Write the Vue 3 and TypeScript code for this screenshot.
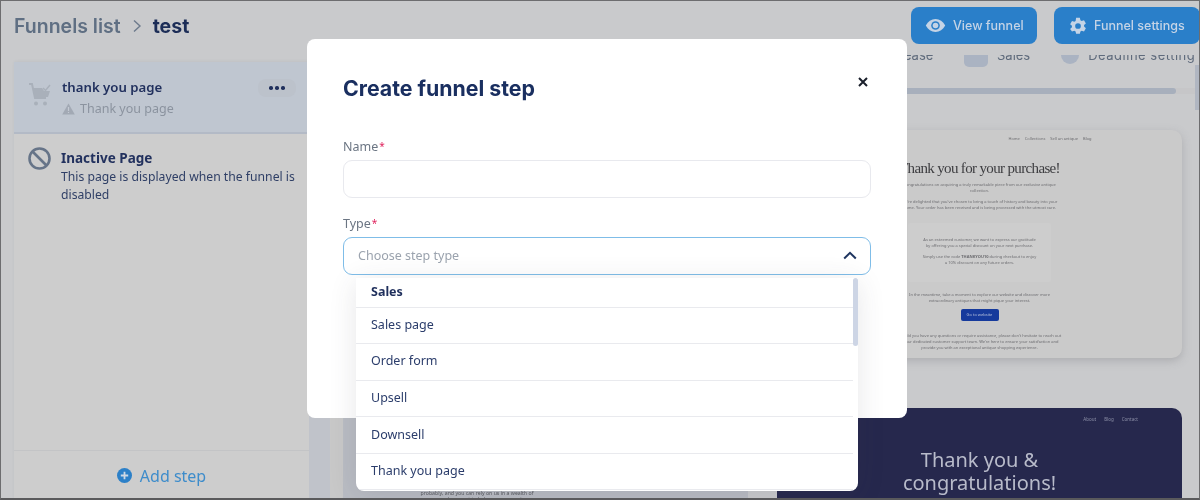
<script setup lang="ts">
const options: string[] = ['Sales page', 'Order form', 'Upsell', 'Downsell', 'Thank you page']
</script>

<template>
  <div class="screen">
    <header class="top">
      <nav class="crumbs">
        <span class="crumb-parent">Funnels list</span>
        <svg class="crumb-sep" width="10" height="14" viewBox="0 0 10 14"><path d="M2 1.5 8 7l-6 5.5" fill="none" stroke="#6d7a8c" stroke-width="1.4" /></svg>
        <span class="crumb-current">test</span>
      </nav>
      <div class="actions">
        <button class="action view">
          <svg width="21" height="15" viewBox="0 0 21 15"><path d="M.8 7.5C3 3.2 6.4 1 10.500 1s7.500 2.200 9.700 6.500C18 11.800 14.600 14 10.500 14S3 11.800.8 7.500Z" fill="#c5d4e6" /><circle cx="10.500" cy="7.500" r="4.300" fill="#2a7fc9" /><circle cx="10.500" cy="7.500" r="2.800" fill="#c5d4e6" /></svg>
          View funnel
        </button>
        <button class="action settings">
          <svg width="18" height="18" viewBox="0 0 24 24"><path fill="#c5d4e6" fill-rule="evenodd" d="M9.500 1h5l.7 3.200 1.700 1 3.100-1 2.500 4.300-2.400 2.200v2l2.400 2.200-2.500 4.300-3.100-1-1.700 1-.7 3.200h-5l-.7-3.200-1.700-1-3.100 1L1.500 15.900l2.400-2.200v-2L1.500 9.500 4 5.200l3.100 1 1.700-1L9.500 1ZM12 8.200a3.800 3.800 0 1 0 0 7.600 3.800 3.800 0 0 0 0-7.600Z" /></svg>
          Funnel settings
        </button>
      </div>
    </header>

    <div class="body">
      <aside class="sidebar">
        <div class="step selected">
          <svg class="cart" width="24" height="26" viewBox="0 0 24 26">
            <path d="M1 2h3l3 14h11" fill="none" stroke="#a9b0ba" stroke-width="2" />
            <path d="M5 6h9l2 3h6l-2 6H7Z" fill="#a9b0ba" />
            <path d="M15 6l2.500 2.500L22 3" fill="none" stroke="#a9b0ba" stroke-width="1.500" />
            <circle cx="8" cy="21.500" r="2" fill="#a9b0ba" /><circle cx="17" cy="21.500" r="2" fill="#a9b0ba" />
          </svg>
          <div class="step-text">
            <div class="step-name">thank you page</div>
            <div class="step-type">
              <svg width="13" height="12" viewBox="0 0 13 12"><path d="M6.500.5 12.800 11.500H.2Z" fill="#a2a9b4" /><path d="M6.500 4v4M6.500 9v1" stroke="#c4cad3" stroke-width="1.200" /></svg>
              Thank you page
            </div>
          </div>
          <span class="dots"><i></i><i></i><i></i></span>
        </div>
        <div class="step inactive">
          <svg class="ban" width="23" height="23" viewBox="0 0 23 23"><circle cx="11.500" cy="11.500" r="10" fill="none" stroke="#667488" stroke-width="2.600" /><path d="M4.500 4.500l14 14" stroke="#667488" stroke-width="2.600" /></svg>
          <div class="step-text">
            <div class="inactive-name">Inactive Page</div>
            <p class="inactive-desc">This page is displayed when the funnel is disabled</p>
          </div>
        </div>
        <div class="add-step">
          <svg width="15" height="15" viewBox="0 0 15 15"><circle cx="7.500" cy="7.500" r="7.500" fill="#2c80c8" /><path d="M3.800 7.500h7.400M7.500 3.800v7.400" stroke="#cdd8e4" stroke-width="1.800" /></svg>
          Add step
        </div>
      </aside>

      <main class="main">
        <div class="tabs">
          <span class="tab-label release">Release</span>
          <span class="tab-icon square"></span>
          <span class="tab-label">Sales</span>
          <span class="tab-icon round"></span>
          <span class="tab-label deadline">Deadline setting</span>
        </div>
        <div class="hscroll"><div class="hthumb"></div></div>
        <div class="previews">
          <div class="column">
            <div class="spacer-card"></div>
            <div class="lower-left">
              <p>probably, and you can rely on us in a wealth of</p>
              <p>resources and support to help you on your journey</p>
            </div>
          </div>
          <div class="column">
            <article class="card light">
              <div class="light-nav"><span>Home</span><span>Collections</span><span>Sell an antique</span><span>Blog</span></div>
              <h3>Thank you for your purchase!</h3>
              <p>Congratulations on acquiring a truly remarkable piece from our exclusive antique<br />collection.</p>
              <p>We're delighted that you've chosen to bring a touch of history and beauty into your<br />home. Your order has been received and is being processed with the utmost care.</p>
              <div class="offer">
                <p>As an esteemed customer, we want to express our gratitude<br />by offering you a special discount on your next purchase.</p>
                <p>Simply use the code <b>THANKYOU10</b> during checkout to enjoy<br />a 10% discount on any future orders.</p>
              </div>
              <p>In the meantime, take a moment to explore our website and discover more<br />extraordinary antiques that might pique your interest.</p>
              <span class="go">Go to website</span>
              <p>Should you have any questions or require assistance, please don't hesitate to reach out<br />to our dedicated customer support team. We're here to ensure your satisfaction and<br />provide you with an exceptional antique shopping experience.</p>
            </article>
            <article class="card dark">
              <div class="dark-nav"><span>About</span><span>Blog</span><span>Contact</span></div>
              <h3>Thank you &amp;<br />congratulations!</h3>
            </article>
          </div>
        </div>
        <div class="vthumb"></div>
      </main>
    </div>

    <section class="modal">
      <div class="modal-head">
        <h2>Create funnel step</h2>
        <svg class="close" width="10" height="10" viewBox="0 0 10 10"><path d="M1 1l8 8M9 1 1 9" stroke="#1a1f2b" stroke-width="2" /></svg>
      </div>
      <label class="field-label">Name<em>*</em></label>
      <div class="input"></div>
      <label class="field-label second">Type<em>*</em></label>
      <div class="input select">
        <span>Choose step type</span>
        <svg width="14" height="9" viewBox="0 0 14 9"><path d="M1.200 7.500 7 1.800l5.800 5.700" fill="none" stroke="#1f3560" stroke-width="2" /></svg>
      </div>
    </section>

    <div class="dropdown">
      <div class="group">Sales</div>
      <div v-for="option in options" :key="option" class="option">{{ option }}</div>
      <div class="thumb"></div>
    </div>
  </div>
</template>

<style>
html, body { margin: 0; background: #c9c9cb; }
</style>

<style scoped>
.screen {
  position: relative;
  width: 1200px;
  height: 500px;
  overflow: hidden;
  box-sizing: border-box;
  background: #c9cacc;
  font-family: "Noto Sans", sans-serif;
  filter: blur(0.5px);
}
.screen::after {
  content: "";
  position: absolute;
  inset: 0;
  border-top: 1px solid #6d6d6f;
  border-left: 1px solid #6d6d6f;
  border-right: 1px solid #6d6d6f;
  border-bottom: 2px solid #5a5a5c;
  pointer-events: none;
}
.top {
  height: 55px;
  display: flex;
  align-items: flex-start;
  justify-content: space-between;
  padding: 7px 0 0 14px;
  box-sizing: border-box;
}
.crumbs {
  display: flex;
  align-items: center;
  height: 37px;
  font-family: Inter, sans-serif;
  font-size: 19.500px;
  font-weight: 600;
}
.crumb-parent { color: #5f6f83; }
.crumb-sep { margin: 0 11px; }
.crumb-current { color: #1c2d57; font-weight: 700; }
.actions { display: flex; gap: 17px; }
.action {
  display: flex;
  align-items: center;
  height: 37px;
  border: 0;
  border-radius: 8px;
  background: #2a7fc9;
  color: #c5d4e6;
  font-family: Inter, sans-serif;
  font-size: 12.500px;
  font-weight: 500;
  padding: 0;
}
.view { width: 126px; padding-left: 14px; gap: 7px; }
.settings { width: 146px; padding-left: 15px; gap: 7px; }
.body { display: flex; height: 445px; padding-left: 14px; }
.sidebar {
  width: 295px;
  flex: none;
  margin-top: 7px;
  height: 438px;
  display: flex;
  flex-direction: column;
  background: #cdcdcd;
  box-shadow: 1px 0 3px rgba(150, 155, 165, 0.3);
  color: #1f2f5c;
}
.step { display: flex; box-sizing: border-box; }
.selected {
  height: 72px;
  padding: 20px 12px 0 14px;
  background: #bfc6d0;
  border-bottom: 2px solid #b3bac6;
  position: relative;
}
.cart { flex: none; margin-right: 10px; }
.step-name { font-size: 13.200px; font-weight: 600; line-height: 18px; margin-top: -4px; color: #22315e; }
.step-type {
  display: flex;
  align-items: center;
  gap: 5px;
  margin-top: 4px;
  font-size: 12.500px;
  line-height: 18px;
  color: #8b939f;
}
.dots {
  position: absolute;
  left: 244px;
  top: 17px;
  width: 38px;
  height: 18px;
  border-radius: 8px;
  background: #bcc2cb;
  display: flex;
  align-items: center;
  justify-content: center;
  gap: 2.500px;
}
.dots i { width: 3.500px; height: 3.500px; border-radius: 50%; background: #1f2f5c; }
.inactive { flex: 1; padding: 13px 10px 0 14px; }
.ban { flex: none; margin-right: 10px; }
.inactive-name { font-size: 13.500px; font-weight: 700; line-height: 18px; margin-top: 2px; color: #22315e; }
.inactive-desc { margin: 1px 0 0; font-size: 12.200px; line-height: 18px; color: #2f3f66; width: 240px; }
.add-step {
  height: 50px;
  flex: none;
  border-top: 1px solid #c3c4c6;
  display: flex;
  align-items: center;
  justify-content: center;
  gap: 8px;
  font-size: 16px;
  color: #3d8ccb;
  box-sizing: border-box;
}
.main {
  position: relative;
  flex: 1;
  overflow: hidden;
  padding-left: 34px;
  background: linear-gradient(90deg, #c0c3ca 0 21px, #c8c8c8 21px 34px, transparent 34px);
}
.tabs {
  display: flex;
  align-items: center;
  height: 24px;
  margin-top: -12px;
  font-family: Inter, sans-serif;
  font-size: 13px;
  color: #5f6b7c;
  white-space: nowrap;
}
.tab-label { flex: none; }
.release { margin-left: 542px; width: 48px; }
.deadline { letter-spacing: 0.5px; }
.tab-icon { flex: none; width: 24px; height: 24px; background: #aab3c2; }
.square { border-radius: 5px; margin: 0 9px 0 31px; }
.round { border-radius: 50%; width: 18px; height: 18px; margin: 0 9px 0 31px; }
.hscroll { height: 6px; margin: 21px 4px 0 -34px; background: #c6c6c8; }
.hthumb { width: 867px; height: 6px; background: #a7afbc; border-radius: 3px; }
.previews { display: grid; grid-template-columns: 405px 405px; gap: 29px; margin-top: 36px; }
.column { display: flex; flex-direction: column; gap: 50px; }
.spacer-card { height: 228px; }
.lower-left {
  height: 110px;
  box-sizing: border-box;
  padding: 82px 137px 0 0;
  background: #b9bcc3;
  text-align: center;
  font-size: 5.200px;
  line-height: 6px;
  color: #55575d;
}
.lower-left p { margin: 0; white-space: nowrap; display: flex; justify-content: center; }
.card { width: 405px; box-sizing: border-box; border-radius: 10px; text-align: center; }
.light {
  height: 228px;
  padding-top: 6px;
  background: #cacaca;
  box-shadow: 0 3px 8px rgba(120, 120, 125, 0.35);
  font-size: 4px;
  line-height: 6px;
  color: #6c6c70;
}
.light-nav { display: flex; justify-content: center; gap: 5px; height: 6px; padding-left: 141px; font-size: 4px; }
.light h3 {
  margin: 17px 0 5px;
  font-family: "Liberation Serif", serif;
  font-size: 15px;
  letter-spacing: -0.65px;
  line-height: 18px;
  font-weight: 400;
  color: #3d3d40;
  white-space: nowrap;
}
.light p { margin: 0 0 5px; white-space: nowrap; }
.offer { width: 143px; margin: 12px auto 10px; padding: 14px 0 11px; background: #cdcdcd; border-radius: 2px; }
.go {
  display: block;
  margin: 5px auto 12px;
  width: 38px;
  height: 12px;
  line-height: 12px;
  background: #163a9c;
  color: #b7c2dc;
  font-size: 4px;
  border-radius: 2px;
}
.dark {
  height: 110px;
  background: #26284d;
  color: #b8bbca;
  padding-top: 7px;
}
.dark-nav { display: flex; justify-content: flex-end; gap: 8px; padding-right: 44px; font-size: 4.500px; line-height: 8px; color: #8b8ea6; }
.dark h3 { margin: 25px 0 0; font-family: "Noto Sans", sans-serif; font-size: 20px; line-height: 23px; font-weight: 400; }
.vthumb { position: absolute; right: 1px; top: 10px; width: 4px; height: 45px; background: #b0b6c1; }

.modal {
  position: absolute;
  left: 307px;
  top: 39px;
  width: 600px;
  height: 379px;
  box-sizing: border-box;
  padding: 32px 36px 0;
  background: #fff;
  border-radius: 8px;
}
.modal-head { display: flex; justify-content: space-between; align-items: flex-start; height: 66px; }
.modal-head h2 {
  margin: 0;
  font-family: Inter, sans-serif;
  font-size: 21.300px;
  line-height: 34px;
  font-weight: 700;
  color: #1a2f60;
}
.close { margin: 6px 3px 0 0; }
.field-label {
  display: block;
  height: 23px;
  font-size: 12.500px;
  line-height: 18px;
  color: #6b7583;
}
.field-label.second { margin-top: 16px; }
.field-label em { color: #e0265f; font-style: normal; margin-left: 1px; font-size: 10px; vertical-align: 1px; }
.input {
  box-sizing: border-box;
  width: 528px;
  height: 38px;
  border: 1px solid #e8e9ee;
  border-radius: 9px;
  background: #fff;
}
.select {
  border-color: #7fbde8;
  display: flex;
  align-items: center;
  justify-content: space-between;
  padding: 0 13px 2px 14px;
  font-size: 12.500px;
  color: #9ba3ae;
}
.dropdown {
  position: absolute;
  left: 356px;
  top: 278px;
  width: 502px;
  height: 213px;
  background: #fff;
  border-radius: 0 0 8px 8px;
  overflow: hidden;
  box-shadow: 0 4px 28px rgba(60, 60, 70, 0.12);
  font-size: 12.500px;
  color: #2b3d6b;
}
.group, .option {
  box-sizing: border-box;
  width: 497px;
  height: 36.600px;
  padding: 0 0 2px 15px;
  display: flex;
  align-items: center;
  border-bottom: 1px solid #e9eaee;
}
.group { height: 29.500px; font-weight: 700; color: #1f2f5c; }
.option:last-of-type { border-bottom: 0; }
.thumb {
  position: absolute;
  right: 0;
  top: 0;
  width: 5px;
  height: 68px;
  border-radius: 3px;
  background: #cdd5e5;
}
</style>
